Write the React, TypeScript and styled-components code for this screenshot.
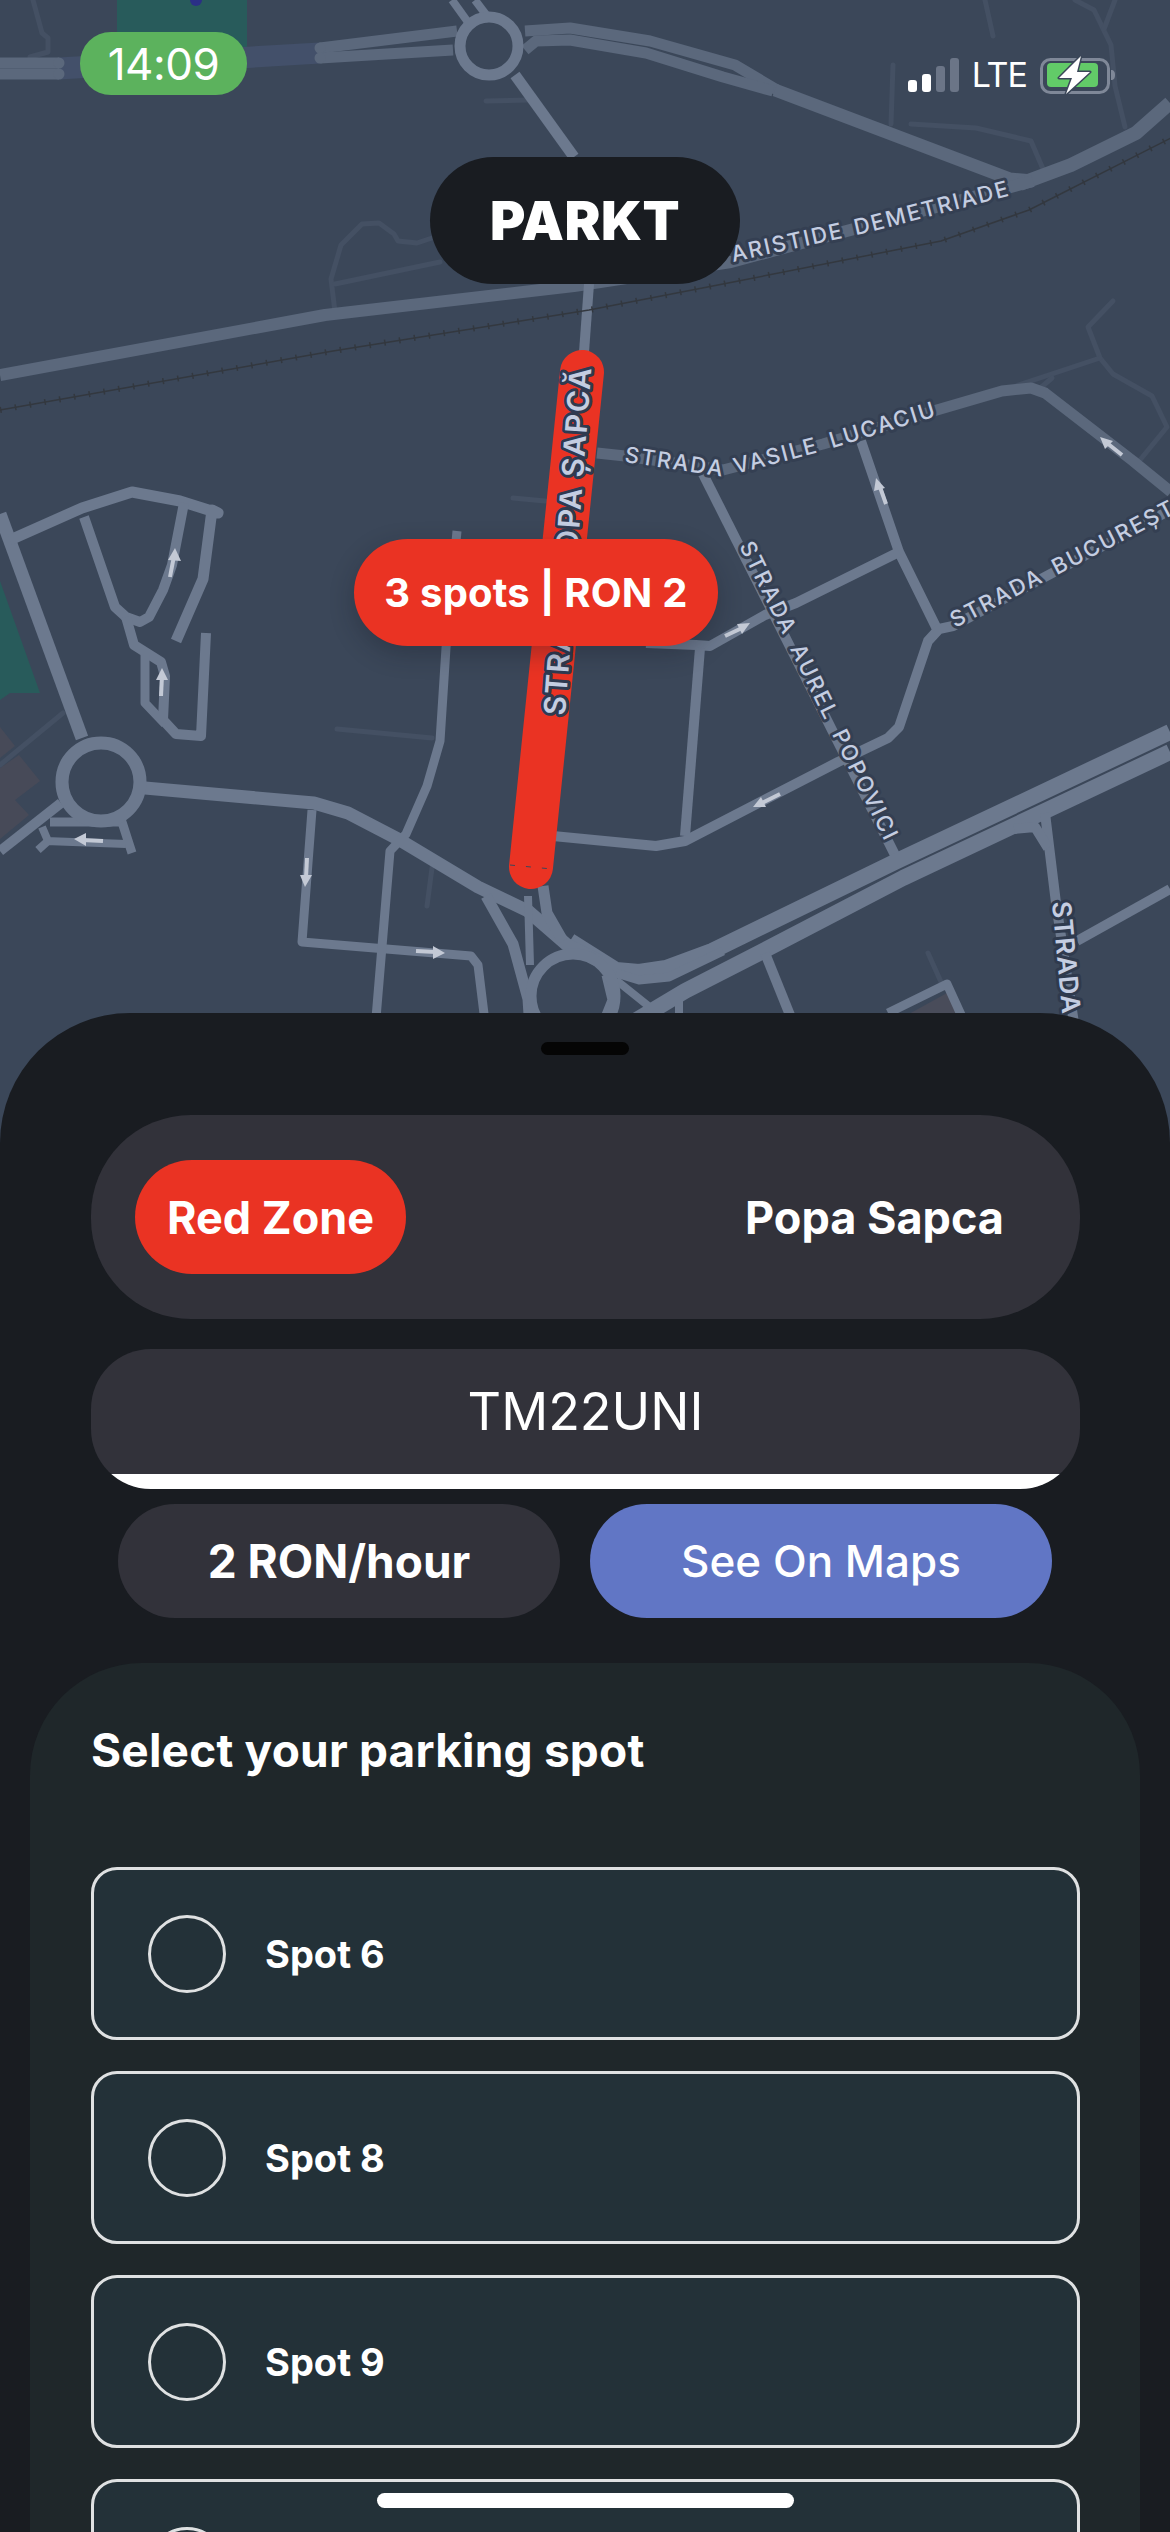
import React from 'react';
import styled, { createGlobalStyle } from 'styled-components';

const GlobalStyle = createGlobalStyle`
    html, body {
        margin: 0;
        padding: 0;
        background: #191c21;
        overflow: hidden;
    }
    * {
        box-sizing: border-box;
    }
`;

const Screen = styled.div`
    position: relative;
    width: 1170px;
    height: 2532px;
    overflow: hidden;
    font-family: Inter, 'Noto Sans', sans-serif;
    color: #fff;
    background: #191c21;
`;

const MapArea = styled.div`
    position: relative;
    height: 1013px;
    display: flex;
    flex-direction: column;
`;

const MapCanvas = styled.svg`
    position: absolute;
    top: 0;
    left: 0;
    width: 1170px;
    height: 1160px;
    background: #3b4759;
`;

const StatusBar = styled.div`
    position: relative;
    display: flex;
    justify-content: space-between;
    align-items: flex-start;
    padding: 32px 54px 0 80px;
`;

const TimePill = styled.div`
    width: 167px;
    height: 63px;
    border-radius: 31px;
    background: #5cb25d;
    display: flex;
    align-items: center;
    justify-content: center;
    font-size: 44px;
    font-weight: 400;
    letter-spacing: -0.5px;
`;

const StatusIcons = styled.div`
    display: flex;
    align-items: center;
    gap: 13px;
    margin-top: 24px;
`;

const Lte = styled.span`
    font-size: 34px;
    line-height: 38px;
    font-weight: 400;
    letter-spacing: -1px;
`;

const Brand = styled.div`
    position: relative;
    align-self: center;
    width: 310px;
    height: 127px;
    margin-top: 62px;
    border-radius: 64px;
    background: #191c21;
    display: flex;
    align-items: center;
    justify-content: center;
    font-size: 54px;
    font-weight: 900;
    letter-spacing: 0.5px;
`;

const ZoneMarker = styled.div`
    position: absolute;
    left: 354px;
    top: 539px;
    width: 364px;
    height: 107px;
    border-radius: 54px;
    background: #ea3323;
    box-shadow: 0 8px 24px rgba(20, 24, 32, 0.3);
    display: flex;
    align-items: center;
    justify-content: center;
    font-size: 40px;
    font-weight: 700;
    letter-spacing: 0.2px;
`;

const Sheet = styled.div`
    position: relative;
    height: 1519px;
    border-radius: 130px 130px 0 0;
    background: #191c21;
    padding-top: 29px;
`;

const Handle = styled.div`
    width: 88px;
    height: 13px;
    margin: 0 auto 60px;
    border-radius: 7px;
    background: #050505;
`;

const Controls = styled.div`
    display: flex;
    flex-direction: column;
    padding: 0 90px 0 91px;
`;

const ZoneCard = styled.div`
    height: 204px;
    border-radius: 100px;
    background: #32323a;
    display: flex;
    align-items: center;
    justify-content: space-between;
    padding: 0 76px 0 44px;
`;

const ZoneBadge = styled.div`
    width: 271px;
    height: 114px;
    border-radius: 57px;
    background: #ea3323;
    display: flex;
    align-items: center;
    justify-content: center;
    font-size: 45px;
    font-weight: 700;
`;

const StreetName = styled.div`
    font-size: 45px;
    font-weight: 700;
`;

const Plate = styled.div`
    height: 140px;
    margin-top: 30px;
    border-radius: 60px;
    overflow: hidden;
    background: #32323a;
    display: flex;
    flex-direction: column;
`;

const PlateText = styled.div`
    flex: 1;
    display: flex;
    align-items: center;
    justify-content: center;
    font-size: 52px;
    font-weight: 400;
`;

const PlateLine = styled.div`
    height: 15px;
    background: #fff;
`;

const Actions = styled.div`
    display: grid;
    grid-template-columns: 442px 462px;
    gap: 30px;
    margin: 15px 0 0 27px;
`;

const ActionButton = styled.div<{ $primary?: boolean }>`
    height: 114px;
    border-radius: 57px;
    background: ${({ $primary }) => ($primary ? '#6176c5' : '#32323a')};
    display: flex;
    align-items: center;
    justify-content: center;
    font-size: ${({ $primary }) => ($primary ? 44 : 46)}px;
    font-weight: ${({ $primary }) => ($primary ? 500 : 700)};
`;

const SpotPanel = styled.div`
    margin: 45px 30px 0;
    padding: 59px 60px 0 61px;
    border-radius: 112px 112px 0 0;
    background: #1f272a;
    height: 900px;
`;

const PanelTitle = styled.div`
    font-size: 46px;
    line-height: 56px;
    font-weight: 700;
    letter-spacing: 0.2px;
    margin-bottom: 89px;
`;

const SpotList = styled.div`
    display: flex;
    flex-direction: column;
    gap: 31px;
`;

const SpotRow = styled.div`
    height: 173px;
    flex-shrink: 0;
    border: 3px solid #dfe1e2;
    border-radius: 26px;
    background: #233138;
    display: flex;
    align-items: center;
    gap: 39px;
    padding-left: 54px;
`;

const Radio = styled.div`
    width: 78px;
    height: 78px;
    border: 3px solid #dfe1e2;
    border-radius: 50%;
`;

const SpotName = styled.div`
    font-size: 38px;
    font-weight: 700;
`;

const HomeBar = styled.div`
    position: absolute;
    left: 377px;
    top: 2493px;
    width: 417px;
    height: 15px;
    border-radius: 8px;
    background: #fff;
`;

const Road = styled.path<{ $w: number; $c: string }>`
    fill: none;
    stroke: ${({ $c }) => $c};
    stroke-width: ${({ $w }) => $w};
    stroke-linejoin: round;
    stroke-linecap: ${({ $w }) => ($w < 8 ? 'round' : 'butt')};
`;

const Arrow = styled.path`
    fill: none;
    stroke: #c3c9d5;
    stroke-width: 4;
`;

const ArrowHead = styled.polygon`
    fill: #c3c9d5;
`;

const StreetLabel = styled.text<{ $size: number; $weight: number; $halo: string }>`
    font-family: Inter, sans-serif;
    font-size: ${({ $size }) => $size}px;
    font-weight: ${({ $weight }) => $weight};
    fill: #c4cde1;
    stroke: ${({ $halo }) => $halo};
    stroke-width: 6px;
    stroke-linejoin: round;
    paint-order: stroke;
`;

const FAINT = '#445063';
const MID = '#5b687c';
const LIGHT = '#6c798e';
const RED = '#ea3323';

const faintRoads = [
    'M33 0L42 33L48 38V52L30 57',
    'M486 101L528 100',
    'M335 312L331 279L341 245L362 224L379 223L394 234L398 241L417 243L432 238',
    'M335 284L440 262',
    'M513 498L545 501',
    'M985 0L993 36',
    'M893 65L891 124',
    'M911 124L976 128L1031 141L1043 169',
    'M1075 0L1094 10L1111 45L1115 86L1125 127',
    'M1115 0L1104 29',
    'M1113 301L1088 327L1100 358L1113 374L1152 396L1167 427L1140 460',
    'M1100 358L1016 386',
    'M1052 378L1038 390',
    'M337 729L432 738',
    'M432 868L427 906',
    'M63 713L0 765',
    'M928 953L941 982',
];

const midRoads = [
    { d: 'M0 63H59', w: 11 },
    { d: 'M0 74H59', w: 11 },
    { d: 'M320 48L457 31', w: 11 },
    { d: 'M320 58L453 50', w: 11 },
    { d: 'M525 31L570 28L650 41L735 65L777 90', w: 11 },
    { d: 'M525 50L536 41L570 40L646 53L723 77L773 91', w: 11 },
    { d: 'M775 90L1010 179L1033 181', w: 13 },
    { d: 'M1020 184L1071 165L1136 133L1170 103', w: 14 },
    { d: 'M1033 181L731 262L574 286L325 315L0 375', w: 12 },
    { d: 'M597 453L625 456L723 470L823 444L930 412L1002 391L1031 388L1045 393L1133 461L1171 492', w: 11 },
];

const lightRoads = [
    { d: 'M452 0L470 25', w: 8 },
    { d: 'M475 0L490 20', w: 8 },
    { d: 'M515 75L574 157', w: 11 },
    { d: 'M589 284L584 352', w: 10 },
    { d: 'M702 472L895 855', w: 10 },
    { d: 'M861 441L899 552L937 629', w: 10 },
    { d: 'M899 552L796 603L765 615L710 646L696 645L646 643', w: 10 },
    { d: 'M700 648L685 836', w: 10 },
    { d: 'M553 836L656 846L685 841L838 762L888 738L899 727L928 641L939 629L953 626L1170 510', w: 10 },
    { d: 'M1170 732L899 860L712 951L666 968L639 972L616 970L570 941', w: 16 },
    { d: 'M1170 752L1045 811L903 878L761 952L685 991L620 1030', w: 16 },
    { d: 'M616 973L639 980L669 977L723 951', w: 9 },
    { d: 'M1045 813L1056 903L1075 1030', w: 10 },
    { d: 'M1014 829L1035 827L1048 848', w: 10 },
    { d: 'M1077 941L1170 889', w: 10 },
    { d: 'M765 953L796 1030', w: 10 },
    { d: 'M888 1013L947 984L968 1030', w: 9 },
    { d: 'M0 514L82 738', w: 13 },
    { d: 'M10 540L82 508L132 492L180 501L218 513L212 510L203 579L176 641', w: 11 },
    { d: 'M184 503L172 565L163 590L149 617L140 622L126 617L115 607L84 517', w: 10 },
    { d: 'M126 617L134 645L161 662L165 676L163 720L176 734L201 736L206 633', w: 10 },
    { d: 'M145 655V703L165 724', w: 9 },
    { d: 'M145 788L314 803L348 813L398 839L478 887L528 911L566 944L600 961', w: 13 },
    { d: 'M61 803L0 851', w: 10 },
    { d: 'M50 822H122L132 853', w: 9 },
    { d: 'M42 827L48 841L38 850M46 841L126 844', w: 8 },
    { d: 'M312 810L302 942L471 956L478 965L486 1030', w: 9 },
    { d: 'M457 531L446 648L440 741L427 786L406 834L390 851L375 1030', w: 9 },
    { d: 'M543 886L547 913L563 941', w: 11 },
    { d: 'M528 896L530 965', w: 8 },
    { d: 'M486 896L513 944L528 999L530 1030', w: 11 },
    { d: 'M606 975L612 1000L600 1030', w: 9 },
    { d: 'M616 980L666 1020', w: 8 },
    { d: 'M679 996V1030', w: 8 },
];

const arrows = [
    { d: 'M170 577L174 556', head: '175,548 168,560 181,561' },
    { d: 'M161 696L162 676', head: '162,668 156,680 168,680' },
    { d: 'M103 841L82 840', head: '74,839 86,833 86,846' },
    { d: 'M307 858L306 878', head: '305,887 300,875 312,875' },
    { d: 'M416 951L436 952', head: '445,953 433,946 433,959' },
    { d: 'M725 636L742 628', head: '750,623 737,624 742,634' },
    { d: 'M780 794L762 803', head: '753,807 766,807 761,797' },
    { d: 'M1122 455L1107 443', head: '1100,437 1105,449 1113,441' },
    { d: 'M886 504L880 487', head: '876,478 874,491 885,488' },
];

const CityMap = () => (
    <MapCanvas viewBox="0 0 1170 1160" aria-hidden="true">
        <defs>
            <path id="aristide" d="M733 262L870 232L1016 194" />
            <path id="lucaciu" d="M624 462L725 477L823 451L940 415" />
            <path id="popovici" d="M739 546L892 856" />
            <path id="bucuresti" d="M955 628L1190 506" />
            <path id="strada" d="M1052 902L1063 1022" />
            <path id="sapca" d="M565 716L592 360" />
        </defs>

        <rect x="117" y="0" width="130" height="52" fill="#285b5b" />
        <circle cx="196" cy="0" r="6" fill="#2b2f86" />
        <polygon points="0,581 40,693 10,693 0,700" fill="#285b5b" />
        <polygon points="0,727 15,746 0,758" fill="#474a58" />
        <polygon points="0,768 19,755 40,781 15,800 29,815 0,839" fill="#474a58" />
        <polygon points="947,993 898,1020 968,1020" fill="#494c5a" />

        {faintRoads.map((d) => (
            <Road key={d} d={d} $w={5} $c={FAINT} />
        ))}
        <Road d="M59 63L320 48M59 74L320 58" $w={11} $c="#43506a" />
        {midRoads.map((r) => (
            <Road key={r.d} d={r.d} $w={r.w} $c={MID} />
        ))}
        <circle cx="59" cy="63" r="5.5" fill={MID} />
        <circle cx="59" cy="74" r="5.5" fill={MID} />
        <circle cx="320" cy="48" r="5.5" fill={MID} />
        <circle cx="320" cy="58" r="5.5" fill={MID} />
        {lightRoads.map((r) => (
            <Road key={r.d} d={r.d} $w={r.w} $c={LIGHT} />
        ))}
        <circle cx="489" cy="46" r="29" fill="none" stroke={LIGHT} strokeWidth="11" />
        <circle cx="101" cy="782" r="39" fill="none" stroke={LIGHT} strokeWidth="13" />
        <circle cx="573" cy="996" r="42" fill="none" stroke={LIGHT} strokeWidth="11" />

        <path
            d="M0 410L333 351L589 310L723 284L941 241L1029 210L1171 138"
            fill="none"
            stroke="#33383f"
            strokeWidth="1.5"
        />
        <path
            d="M0 410L333 351L589 310L723 284L941 241L1029 210L1171 138"
            fill="none"
            stroke="#33383f"
            strokeWidth="6"
            strokeDasharray="1.5 13.5"
        />

        {arrows.map((a) => (
            <g key={a.d}>
                <Arrow d={a.d} />
                <ArrowHead points={a.head} />
            </g>
        ))}

        <Road d="M582 372L531 867" $w={44} $c={RED} style={{ strokeLinecap: 'round' }} />
        <path d="M510 865L552 869" fill="none" stroke="#3b4759" strokeWidth="1" strokeDasharray="5 11" />

        <StreetLabel $size={22} $weight={500} $halo="#343f52" letterSpacing="1.9" wordSpacing="3">
            <textPath href="#aristide">ARISTIDE DEMETRIADE</textPath>
        </StreetLabel>
        <StreetLabel $size={22} $weight={500} $halo="#343f52" letterSpacing="1.9" wordSpacing="5">
            <textPath href="#lucaciu">STRADA VASILE LUCACIU</textPath>
        </StreetLabel>
        <StreetLabel $size={22} $weight={500} $halo="#343f52" letterSpacing="2.1" wordSpacing="5">
            <textPath href="#popovici">STRADA AUREL POPOVICI</textPath>
        </StreetLabel>
        <StreetLabel $size={22} $weight={500} $halo="#343f52" letterSpacing="2.1" wordSpacing="5">
            <textPath href="#bucuresti">STRADA BUCUREȘTI</textPath>
        </StreetLabel>
        <StreetLabel $size={26} $weight={600} $halo="#2f3a4d" letterSpacing="1.2">
            <textPath href="#strada">STRADA</textPath>
        </StreetLabel>
        <StreetLabel $size={30} $weight={600} $halo="#2f3a50" letterSpacing="1.6">
            <textPath href="#sapca">STRADA POPA ȘAPCĂ</textPath>
        </StreetLabel>
    </MapCanvas>
);

const SignalIcon = () => (
    <svg width="51" height="34" viewBox="0 0 51 34" aria-hidden="true">
        <rect x="0" y="22" width="9" height="12" rx="3" fill="#fff" />
        <rect x="14" y="16" width="9" height="18" rx="3" fill="#fff" />
        <rect x="28" y="8" width="9" height="26" rx="3" fill="#6b7587" />
        <rect x="42" y="0" width="9" height="34" rx="3" fill="#6b7587" />
    </svg>
);

const BatteryIcon = () => (
    <svg width="76" height="38" viewBox="0 0 76 38" aria-hidden="true">
        <rect x="1.5" y="3.5" width="67" height="33" rx="9" fill="none" stroke="#7f8898" strokeWidth="3" />
        <rect x="7" y="7" width="51" height="24" rx="4" fill="#62cb68" />
        <path d="M71 14c3 0 4 2 4 5s-1 5-4 5z" fill="#7f8898" />
        <polygon
            points="41,0 19,22 32,22 26,38 50,16 37,16"
            fill="#fff"
            stroke="#3b4759"
            strokeWidth="3"
            strokeLinejoin="round"
            style={{ paintOrder: 'stroke' }}
        />
    </svg>
);

const spots = ['Spot 6', 'Spot 8', 'Spot 9', 'Spot 10'];

const App = () => (
    <Screen>
        <GlobalStyle />
        <MapArea>
            <CityMap />
            <StatusBar>
                <TimePill>14:09</TimePill>
                <StatusIcons>
                    <SignalIcon />
                    <Lte>LTE</Lte>
                    <BatteryIcon />
                </StatusIcons>
            </StatusBar>
            <Brand>PARKT</Brand>
            <ZoneMarker>3 spots | RON 2</ZoneMarker>
        </MapArea>
        <Sheet>
            <Handle />
            <Controls>
                <ZoneCard>
                    <ZoneBadge>Red Zone</ZoneBadge>
                    <StreetName>Popa Sapca</StreetName>
                </ZoneCard>
                <Plate>
                    <PlateText>TM22UNI</PlateText>
                    <PlateLine />
                </Plate>
                <Actions>
                    <ActionButton>2 RON/hour</ActionButton>
                    <ActionButton $primary>See On Maps</ActionButton>
                </Actions>
            </Controls>
            <SpotPanel>
                <PanelTitle>Select your parking spot</PanelTitle>
                <SpotList>
                    {spots.map((spot) => (
                        <SpotRow key={spot}>
                            <Radio />
                            <SpotName>{spot}</SpotName>
                        </SpotRow>
                    ))}
                </SpotList>
            </SpotPanel>
        </Sheet>
        <HomeBar />
    </Screen>
);

export default App;
